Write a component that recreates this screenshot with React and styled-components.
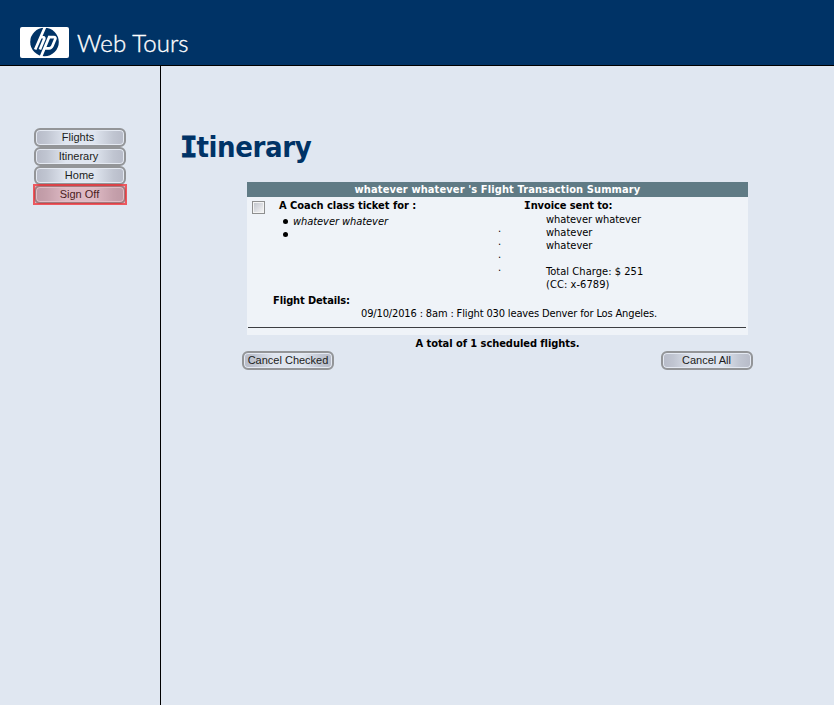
import React from 'react';
import styled, { createGlobalStyle } from 'styled-components';

const Global = createGlobalStyle`
  * { box-sizing: border-box; }
  body { margin: 0; background: #e0e7f1; }
  h1, h2, h3, p, ul { margin: 0; padding: 0; }
`;

const Page = styled.div`
  display: flex;
  flex-direction: column;
  width: 100%;
  height: 705px;
  overflow: hidden;
  background: #e0e7f1;
  color: #000;
  font: 11px/13px 'DejaVu Sans Condensed', 'DejaVu Sans', sans-serif;
  font-stretch: condensed;
`;

const Header = styled.header`
  display: flex;
  align-items: flex-start;
  flex: none;
  height: 66px;
  padding: 27px 0 0 20px;
  background: #003366;
  border-bottom: 1px solid #000;
`;

const Brand = styled.span`
  margin-left: 8px;
  font: 24px/31px Lato, sans-serif;
  font-weight: 300;
  letter-spacing: 0.1px;
  -webkit-text-stroke: 0.35px #fff;
  color: #fff;
  white-space: nowrap;
`;

const Body = styled.div`
  display: flex;
  flex: 1;
  min-height: 0;
`;

const Sidebar = styled.nav`
  display: flex;
  flex-direction: column;
  flex: none;
  width: 161px;
  padding: 62px 0 0 34px;
  border-right: 1px solid #000;
`;

const NavSlot = styled.div`
  height: 19px;
`;

const Highlight = styled(NavSlot)`
  width: 94px;
  height: 21px;
  margin: -1px 0 0 -1px;
  padding: 1px;
  position: relative;
  &::after {
    content: '';
    position: absolute;
    inset: 0;
    border: 2px solid rgba(240, 40, 45, 0.75);
    background: rgba(220, 30, 40, 0.22);
    background-clip: padding-box;
  }
`;

const ImageButton = styled.button`
  display: flex;
  justify-content: center;
  align-items: flex-start;
  width: 92px;
  height: 19px;
  padding: 1px ${p => p.$shift || 0}px 0 0;
  border: 2px solid #939598;
  border-radius: 6px;
  background: linear-gradient(90deg, #b7bbc8 0%, #c0c5d1 12%, #dfe5ef 34%, #dfe5ef 66%, #c0c5d1 88%, #b7bbc8 100%);
  box-shadow: inset 0 0 0 1px #e4e9f2;
  font: 11px/13px 'Liberation Sans', sans-serif;
  color: #1c1c20;
  white-space: nowrap;
`;

const Main = styled.main`
  flex: 1;
  padding: 61px 0 0 20px;
`;

const Title = styled.h1`
  height: 55px;
  margin-left: -1px;
  font: bold 29px/40px 'DejaVu Sans Condensed', 'DejaVu Sans', sans-serif;
  font-stretch: condensed;
  letter-spacing: -0.4px;
  color: #003366;
`;

const SerifCap = styled.span`
  font-family: 'DejaVu Sans Mono', monospace;
  letter-spacing: ${p => p.$spacing || 0};
  -webkit-text-stroke: ${p => p.$stroke || '0.2px'} currentColor;
`;

const Summary = styled.section`
  width: 501px;
  height: 153px;
  margin-left: 66px;
  background: #eff3f8;
`;

const SummaryHeader = styled.h2`
  height: 15px;
  background: #607b85;
  color: #fff;
  font-size: 11px;
  line-height: 16px;
  text-align: center;
`;

const Text = styled.span`
  display: inline-block;
  white-space: nowrap;
  letter-spacing: ${p => p.$spacing || 'normal'};
  font-weight: ${p => (p.$bold ? 'bold' : 'normal')};
  font-style: ${p => (p.$italic ? 'italic' : 'normal')};
`;

const Columns = styled.div`
  display: grid;
  grid-template-columns: 32px 219px 26px 1fr;
  height: 97px;
  padding-top: 2px;
`;

const Checkbox = styled.input`
  appearance: none;
  display: block;
  width: 13px;
  height: 13px;
  margin: 2px 0 0 5px;
  padding: 1px;
  border: 1px solid #8e8f8f;
  background: linear-gradient(135deg, #c3c7ce, #f3f3f4) content-box, #f4f4f4;
`;

const Passengers = styled.ul`
  list-style: none;
  padding-top: 3px;
`;

const Passenger = styled.li`
  display: flex;
  align-items: center;
  height: 13px;
  &::before {
    content: '';
    width: 5px;
    height: 5px;
    margin: 0 5px 0 4px;
    border-radius: 50%;
    background: #000;
  }
`;

const Dots = styled.div`
  padding-top: 23px;
`;

const Line = styled.div`
  height: 13px;
`;

const Address = styled.div`
  padding: 1px 0 0 22px;
`;

const Details = styled.div`
  padding-left: 26px;
`;

const Itinerary = styled.div`
  padding-left: 88px;
`;

const Rule = styled.hr`
  height: 1px;
  margin: 7px 2px 0 1px;
  border: 0;
  background: #3c3e42;
`;

const Total = styled.p`
  width: 501px;
  margin: 2px 0 0 66px;
  text-align: center;
`;

const Actions = styled.div`
  display: flex;
  justify-content: space-between;
  width: 511px;
  margin: 1px 0 0 61px;
`;

const Logo = () => (
  <svg width="49" height="31" viewBox="0 0 49 31">
    <rect width="49" height="31" rx="2" fill="#fff" />
    <circle cx="24.5" cy="15" r="14.3" fill="#003366" />
    <g fill="none" stroke="#fff" strokeWidth="2.7">
      <path d="M25.5 -1 L15.2 22.5 M19.8 10.2 H22.6 Q25 10.2 24 12.6 L19.9 22.5" />
      <path d="M29.6 9 L20 32 M29 10.2 H33.8 Q36.2 10.2 35.1 12.6 L32.4 19 Q31.4 21.3 29.2 21.3 H24.5" />
    </g>
  </svg>
);

export default function App() {
  return (
    <>
      <Global />
      <Page>
        <Header>
          <Logo />
          <Brand>Web Tours</Brand>
        </Header>
        <Body>
          <Sidebar>
            <NavSlot><ImageButton $shift={4}>Flights</ImageButton></NavSlot>
            <NavSlot><ImageButton $shift={3}>Itinerary</ImageButton></NavSlot>
            <NavSlot><ImageButton $shift={1}>Home</ImageButton></NavSlot>
            <Highlight><ImageButton $shift={1}>Sign Off</ImageButton></Highlight>
          </Sidebar>
          <Main>
            <Title><SerifCap $spacing="-1px" $stroke="0.8px">I</SerifCap>tinerary</Title>
            <Summary>
              <SummaryHeader><Text $bold $spacing="0.11px">whatever whatever 's Flight Transaction Summary</Text></SummaryHeader>
              <Columns>
                <Checkbox type="checkbox" />
                <div>
                  <Line><Text $bold $spacing="-0.03px">A Coach class ticket for :</Text></Line>
                  <Passengers>
                    <Passenger><Text $italic $spacing="-0.06px">whatever whatever</Text></Passenger>
                    <Passenger />
                  </Passengers>
                </div>
                <Dots>
                  <Line>.</Line>
                  <Line>.</Line>
                  <Line>.</Line>
                  <Line>.</Line>
                </Dots>
                <div>
                  <Line><Text $bold $spacing="-0.08px"><SerifCap>I</SerifCap>nvoice sent to:</Text></Line>
                  <Address>
                    <Line><Text $spacing="-0.06px">whatever whatever</Text></Line>
                    <Line><Text>whatever</Text></Line>
                    <Line><Text>whatever</Text></Line>
                    <Line />
                    <Line><Text $spacing="0.05px">Total Charge: $ 251</Text></Line>
                    <Line><Text $spacing="0.07px">(CC: x-6789)</Text></Line>
                  </Address>
                </div>
              </Columns>
              <Details>
                <Line><Text $bold $spacing="-0.13px">Flight Details:</Text></Line>
                <Itinerary>
                  <Line><Text $spacing="-0.14px">09/10/2016 : 8am : Flight 030 leaves Denver for Los Angeles.</Text></Line>
                </Itinerary>
              </Details>
              <Rule />
            </Summary>
            <Total><Text $bold $spacing="-0.05px">A total of 1 scheduled flights.</Text></Total>
            <Actions>
              <ImageButton>Cancel Checked</ImageButton>
              <ImageButton $shift={1}>Cancel All</ImageButton>
            </Actions>
          </Main>
        </Body>
      </Page>
    </>
  );
}
